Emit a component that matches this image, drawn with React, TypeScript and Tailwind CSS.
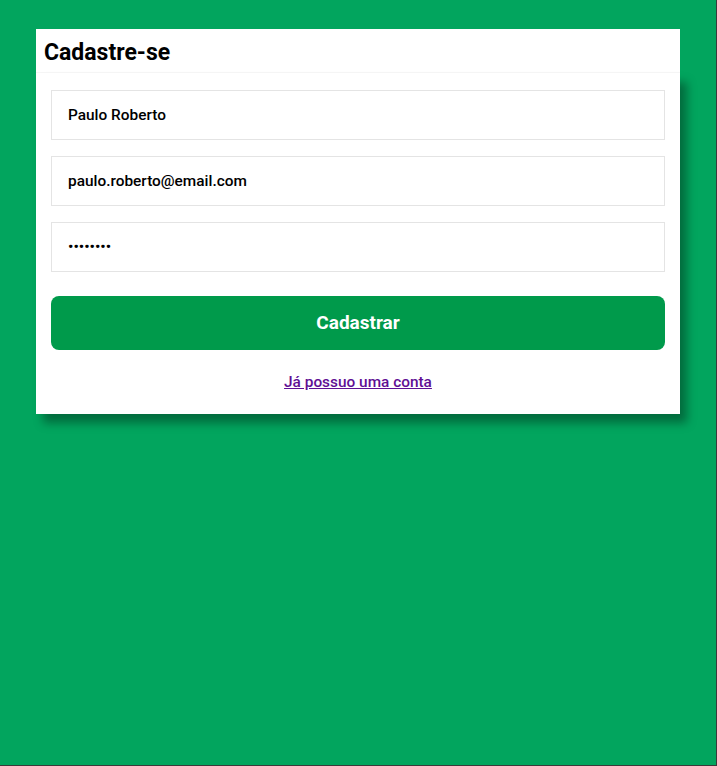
import React from "react";

const fields = [
  { type: "text", value: "Paulo Roberto" },
  { type: "email", value: "paulo.roberto@email.com" },
  { type: "password", value: "12345678" },
];

const App = () => {
  return (
    <div
      className="min-h-screen w-full bg-[#02a55e] border-r border-b border-[#3a3a3a] pt-[29px] px-[36px]"
      style={{ fontFamily: "Roboto, 'Liberation Sans', sans-serif" }}
    >
      <div className="w-[644px]">
        <div className="h-[44px] bg-white flex items-center px-[8px] pt-[4px] border-b border-[#f6f6f6]">
          <h1 className="text-[23px] font-bold text-black leading-none">Cadastre-se</h1>
        </div>
        <form className="bg-white px-[15px] pt-[17px] pb-[22px] flex flex-col shadow-[7px_9px_9px_rgba(0,0,0,0.35)]">
          <div className="flex flex-col gap-4">
            {fields.map((f) => (
              <input
                key={f.type}
                type={f.type}
                defaultValue={f.value}
                className="h-[50px] w-full border border-[#e4e4e4] bg-white px-4 text-[15.4px] font-medium text-black outline-none"
              />
            ))}
          </div>
          <button
            type="button"
            className="mt-6 h-[54px] w-full rounded-lg bg-[#009a4b] text-white text-[19px] font-bold"
          >
            Cadastrar
          </button>
          <div className="mt-[22px] flex justify-center">
            <a href="#" className="text-[15.4px] font-medium text-[#5f0f94] underline leading-5">
              Já possuo uma conta
            </a>
          </div>
        </form>
      </div>
    </div>
  );
};

export default App;
